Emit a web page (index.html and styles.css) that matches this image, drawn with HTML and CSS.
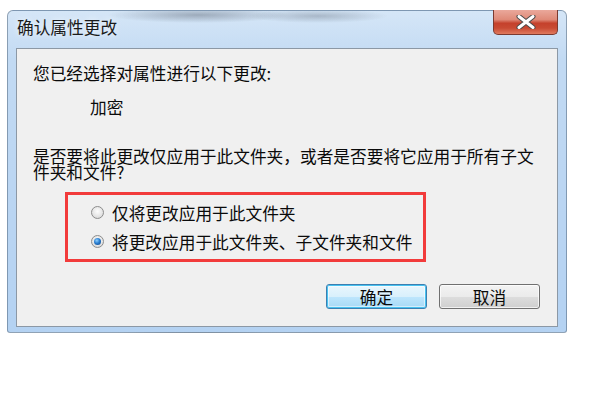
FILE: index.html
```html
<!DOCTYPE html>
<html lang="zh-CN">
<head>
    <meta charset="UTF-8">
    <title>确认属性更改</title>
    <link rel="stylesheet" href="styles.css">
</head>
<body>
    <div class="window">
        <!-- Titelleiste -->
        <div class="titlebar">
            <span class="title">确认属性更改</span>
            <div class="close-btn">
                <svg width="20" height="14" viewBox="0 0 20 14">
                    <path d="M3 1.5 L17 12.5 M17 1.5 L3 12.5" stroke="#4a4a4a" stroke-width="5" stroke-linecap="round"/>
                    <path d="M3 1.5 L17 12.5 M17 1.5 L3 12.5" stroke="#ffffff" stroke-width="3" stroke-linecap="round"/>
                </svg>
            </div>
        </div>

        <div class="panel">
            <p class="line">您已经选择对属性进行以下更改:</p>
            <p class="line attr">加密</p>
            <p class="question">是否要将此更改仅应用于此文件夹，或者是否要将它应用于所有子文件夹和文件?</p>

            <div class="choices">
                <label class="choice">
                    <span class="radio"></span>
                    仅将更改应用于此文件夹
                </label>
                <label class="choice">
                    <span class="radio checked"></span>
                    将更改应用于此文件夹、子文件夹和文件
                </label>
            </div>

            <div class="button-row">
                <button class="btn btn-default">确定</button>
                <button class="btn">取消</button>
            </div>
        </div>
    </div>
</body>
</html>
```

FILE: styles.css
```css
/* Grundlayout */
body {
    margin: 0;
    background: #ffffff;
    font-family: "Noto Sans CJK SC", "Noto Sans", sans-serif;
    font-size: 16.7px;
    color: #0a0a0a;
}

/* Fensterrahmen */
.window {
    box-sizing: border-box;
    width: 560px;
    height: 323px;
    margin: 10px 0 0 7px;
    padding: 0 8px 5px 8px;
    border: 1px solid rgba(60, 80, 100, 0.45);
    border-radius: 6px 6px 3px 3px;
    background:
        radial-gradient(ellipse 90px 8px at 190px 4px, rgba(90, 100, 115, 0.45), transparent),
        radial-gradient(ellipse 70px 7px at 310px 5px, rgba(90, 100, 115, 0.35), transparent),
        linear-gradient(to bottom, #d5e6f7 0%, #c2daf3 15%, #bad5f2 60%, #b4d2f2 100%);
    display: flex;
    flex-direction: column;
}

.titlebar {
    height: 37px;
    display: flex;
    justify-content: space-between;
    align-items: flex-start;
}
.title {
    margin: 8px 0 0 1px;
    line-height: 16px;
    color: #1a1a1a;
    text-shadow: 0 0 6px rgba(255, 255, 255, 0.9);
}
.close-btn {
    width: 65px;
    height: 25px;
    margin-top: -1px;
    box-sizing: border-box;
    border: 1px solid #7b3a30;
    border-top: none;
    border-radius: 0 0 5px 5px;
    background: linear-gradient(to bottom, #eaa89b 0%, #df8a78 40%, #c5412c 55%, #c84a33 75%, #e07a5e 100%);
    display: flex;
    justify-content: center;
    align-items: center;
}

/* Inhaltsbereich */
.panel {
    flex: 1;
    background: #f0f0f0;
    border: 1px solid #8c98a5;
    padding: 16px 17px 0 16px;
}
.line {
    margin: 0;
    line-height: 16px;
}
.attr {
    margin: 18px 0 0 57px;
}
.question {
    margin: 33px 0 0 0;
    line-height: 16px;
}

/* Markierung */
.choices {
    width: 361px;
    box-sizing: border-box;
    margin: 12px 0 0 32px;
    padding: 3px 0 3px 23px;
    border: 3px solid #f23b3b;
}
.choice {
    height: 29px;
    display: flex;
    align-items: center;
    gap: 8px;
}
.radio {
    width: 13px;
    height: 13px;
    box-sizing: border-box;
    border-radius: 50%;
    border: 1px solid #8d8d8d;
    background: radial-gradient(circle at 50% 40%, #fdfdfd 0%, #e6e6e6 55%, #cfcfcf 100%);
    display: flex;
    justify-content: center;
    align-items: center;
}
.radio.checked::after {
    content: "";
    width: 7px;
    height: 7px;
    border-radius: 50%;
    background: radial-gradient(circle at 40% 35%, #8fd0ff 0%, #2a7ed0 45%, #0d3f80 100%);
}

/* Buttons */
.button-row {
    margin-top: 22px;
    display: flex;
    justify-content: flex-end;
    gap: 12px;
}
.btn {
    width: 101px;
    height: 25px;
    font-family: inherit;
    font-size: 16.7px;
    line-height: 16px;
    color: #0a0a0a;
    padding: 0;
    border: 1px solid #707070;
    border-radius: 3px;
    background: linear-gradient(to bottom, #f3f3f3 0%, #ebebeb 50%, #dddddd 51%, #cfcfcf 100%);
    box-shadow: inset 0 0 0 1px rgba(255, 255, 255, 0.7);
}
.btn-default {
    border-color: #3c7fb1;
    background: linear-gradient(to bottom, #eaf6fd 0%, #d9f0fc 50%, #bee6fd 51%, #a7d9f5 100%);
    box-shadow: inset 0 0 0 1px #48c2f0, inset 0 0 0 2px rgba(255, 255, 255, 0.5);
}
```
